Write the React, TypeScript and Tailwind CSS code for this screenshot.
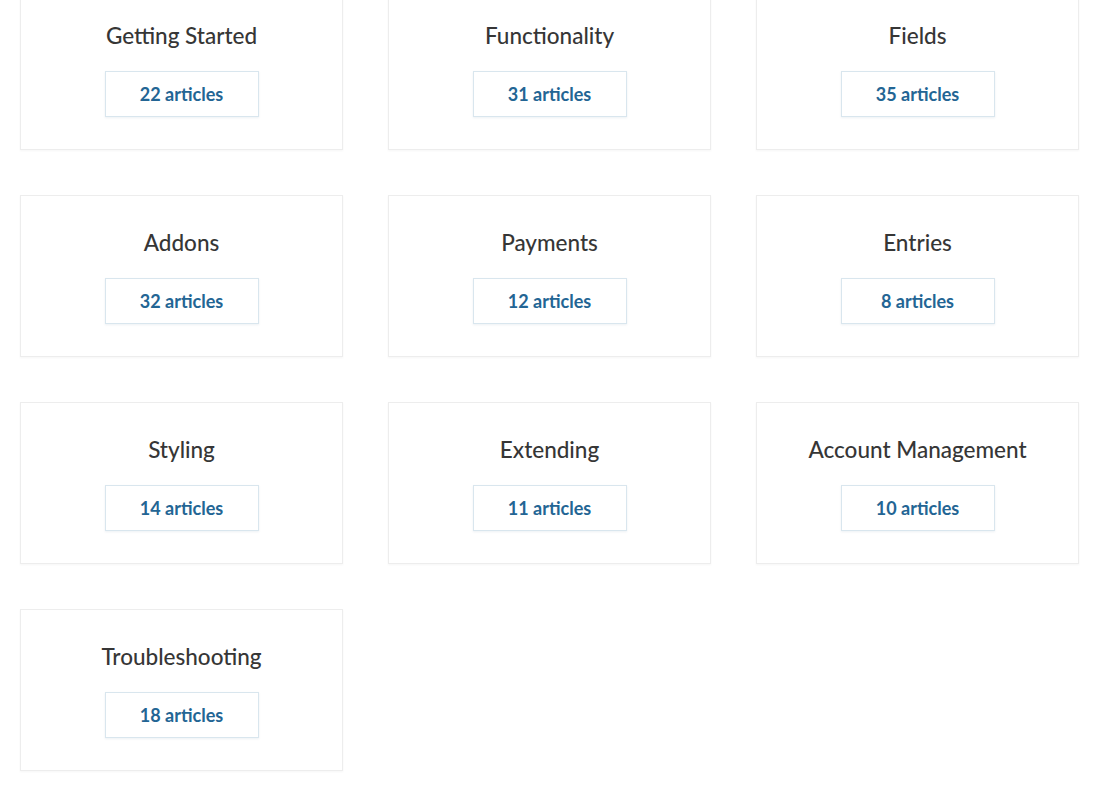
import React from "react";

const categories = [
  { title: "Getting Started", count: 22 },
  { title: "Functionality", count: 31 },
  { title: "Fields", count: 35 },
  { title: "Addons", count: 32 },
  { title: "Payments", count: 12 },
  { title: "Entries", count: 8 },
  { title: "Styling", count: 14 },
  { title: "Extending", count: 11 },
  { title: "Account Management", count: 10 },
  { title: "Troubleshooting", count: 18 },
];

export default function App() {
  return (
    <div className="min-h-[792px] bg-white overflow-hidden font-['Lato','Liberation_Sans',sans-serif]">
      <div className="mt-[-12px] pl-[20px] grid grid-cols-[323px_323px_323px] gap-x-[45px] gap-y-[45px]">
        {categories.map((c) => (
          <div
            key={c.title}
            className="h-[162px] bg-white border border-[#ededed] shadow-[0_1px_2px_rgba(0,0,0,0.04)] flex flex-col items-center pt-[33px]"
          >
            <h3 className="text-[22.5px] leading-[28px] font-medium text-[#363636]">
              {c.title}
            </h3>
            <a
              href="#"
              className="mt-[21px] w-[154px] h-[46px] flex items-center justify-center border border-[#d9e6ee] shadow-[0_1px_2px_rgba(30,80,120,0.08)] text-[18px] font-bold text-[#236594]"
            >
              {c.count} articles
            </a>
          </div>
        ))}
      </div>
    </div>
  );
}
